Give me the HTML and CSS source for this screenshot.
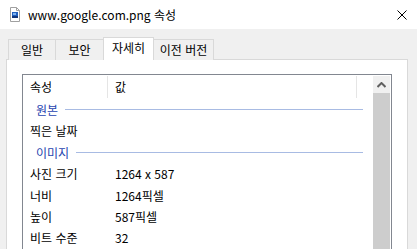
FILE: index.html
```html
<!DOCTYPE html>
<html lang="ko">
<head>
    <meta charset="UTF-8">
    <title>www.google.com.png 속성</title>
    <link rel="stylesheet" href="styles.css">
</head>
<body>
    <div class="titlebar">
        <svg class="file-icon" width="10" height="15" viewBox="0 0 10 15">
            <path d="M0.5 0.5 H6.5 L9.5 3.5 V14.5 H0.5 Z" fill="#fff" stroke="#a0a0a0"/>
            <path d="M6.5 0.5 V3.5 H9.5" fill="none" stroke="#a0a0a0"/>
            <rect x="2" y="5" width="6" height="6" fill="#1f5fbf"/>
            <rect x="3" y="6" width="3" height="2" fill="#7fb2ee"/>
            <rect x="2" y="9" width="6" height="2" fill="#10357a"/>
        </svg>
        <span class="title">www.google.com.png 속성</span>
        <svg class="close" width="10" height="10" viewBox="0 0 10 10">
            <path d="M0.5 0.5 L9.5 9.5 M9.5 0.5 L0.5 9.5" stroke="#000" stroke-width="1"/>
        </svg>
    </div>

    <div class="window">
        <div class="tabs">
            <div class="tab t1">일반</div>
            <div class="tab t2">보안</div>
            <div class="tab t3 active">자세히</div>
            <div class="tab t4">이전 버전</div>
        </div>
        <div class="panel">
            <div class="list">
                <div class="list-body">
                    <div class="header">
                        <div class="col-name">속성</div>
                        <div class="col-value">값</div>
                    </div>
                    <div class="group first"><span>원본</span><i></i></div>
                    <div class="row"><div class="name">찍은 날짜</div><div class="value"></div></div>
                    <div class="group"><span>이미지</span><i></i></div>
                    <div class="row tall"><div class="name">사진 크기</div><div class="value">1264 x 587</div></div>
                    <div class="row"><div class="name">너비</div><div class="value">1264픽셀</div></div>
                    <div class="row"><div class="name">높이</div><div class="value">587픽셀</div></div>
                    <div class="row"><div class="name">비트 수준</div><div class="value">32</div></div>
                </div>
                <div class="scrollbar">
                    <div class="arrow">
                        <svg width="9" height="6" viewBox="0 0 9 6">
                            <path d="M0.5 5 L4.5 1 L8.5 5" fill="none" stroke="#606060" stroke-width="2"/>
                        </svg>
                    </div>
                    <div class="thumb"></div>
                </div>
            </div>
        </div>
    </div>
</body>
</html>
```

FILE: styles.css
```css
html, body {
    margin: 0;
    padding: 0;
    height: 100%;
    overflow: hidden;
}
body {
    font-family: "Noto Sans CJK KR", "Noto Sans", sans-serif;
    font-size: 12px;
    color: #000;
    background: #f0f0f0;
}
.titlebar {
    height: 29px;
    background: #fff;
    display: flex;
    align-items: center;
    padding-left: 10px;
    padding-right: 10px;
}
.file-icon {
    margin-right: 8px;
}
.title {
    flex: 1;
    font-size: 12px;
    color: #000;
}
.window {
    padding: 9px 9px 0 6px;
}
.tabs {
    display: flex;
    align-items: flex-end;
    padding-left: 2px;
    height: 22px;
    margin-bottom: -1px;
    position: relative;
    z-index: 1;
}
.tab {
    height: 21px;
    line-height: 19px;
    text-align: center;
    border: 1px solid #d9d9d9;
    border-bottom: none;
    margin-right: -1px;
    background: #f0f0f0;
    box-sizing: border-box;
}
.t1 { width: 48px; }
.t2 { width: 49px; }
.t3 { width: 51px; }
.t4 { width: 61px; }
.tab.active {
    height: 23px;
    line-height: 20px;
    background: #fff;
    position: relative;
    z-index: 2;
}
.panel {
    background: #fff;
    border: 1px solid #d9d9d9;
    border-bottom: none;
    padding: 14px 15px 0 15px;
    height: 175px;
}
.list {
    border: 1px solid #828790;
    border-bottom: none;
    display: flex;
    height: 174px;
}
.list-body {
    flex: 1;
    padding-right: 10px;
}
.header {
    display: flex;
    height: 24px;
}
.col-name {
    width: 77px;
    padding-left: 7px;
    border-right: 1px solid #e5e5e5;
    margin-top: 1px;
    height: 22px;
    line-height: 22px;
}
.col-value {
    width: 241px;
    padding-left: 7px;
    border-right: 1px solid #e5e5e5;
    margin-top: 1px;
    height: 22px;
    line-height: 22px;
}
.group {
    display: flex;
    align-items: center;
    height: 22px;
    padding-left: 13px;
    color: #1f45b0;
}
.group.first {
    height: 21px;
}
.group span {
    margin-right: 7px;
}
.group i {
    flex: 1;
    height: 1px;
    background: #a8bbe3;
}
.row {
    display: flex;
    height: 21px;
    line-height: 21px;
}
.row.tall {
    height: 22px;
    line-height: 22px;
}
.name {
    width: 85px;
    padding-left: 7px;
}
.scrollbar {
    width: 17px;
    padding-top: 1px;
    margin-right: 1px;
    display: flex;
    flex-direction: column;
}
.arrow {
    height: 17px;
    background: #f0f0f0;
    display: flex;
    align-items: center;
    justify-content: center;
}
.thumb {
    flex: 1;
    background: #cdcdcd;
}
```
